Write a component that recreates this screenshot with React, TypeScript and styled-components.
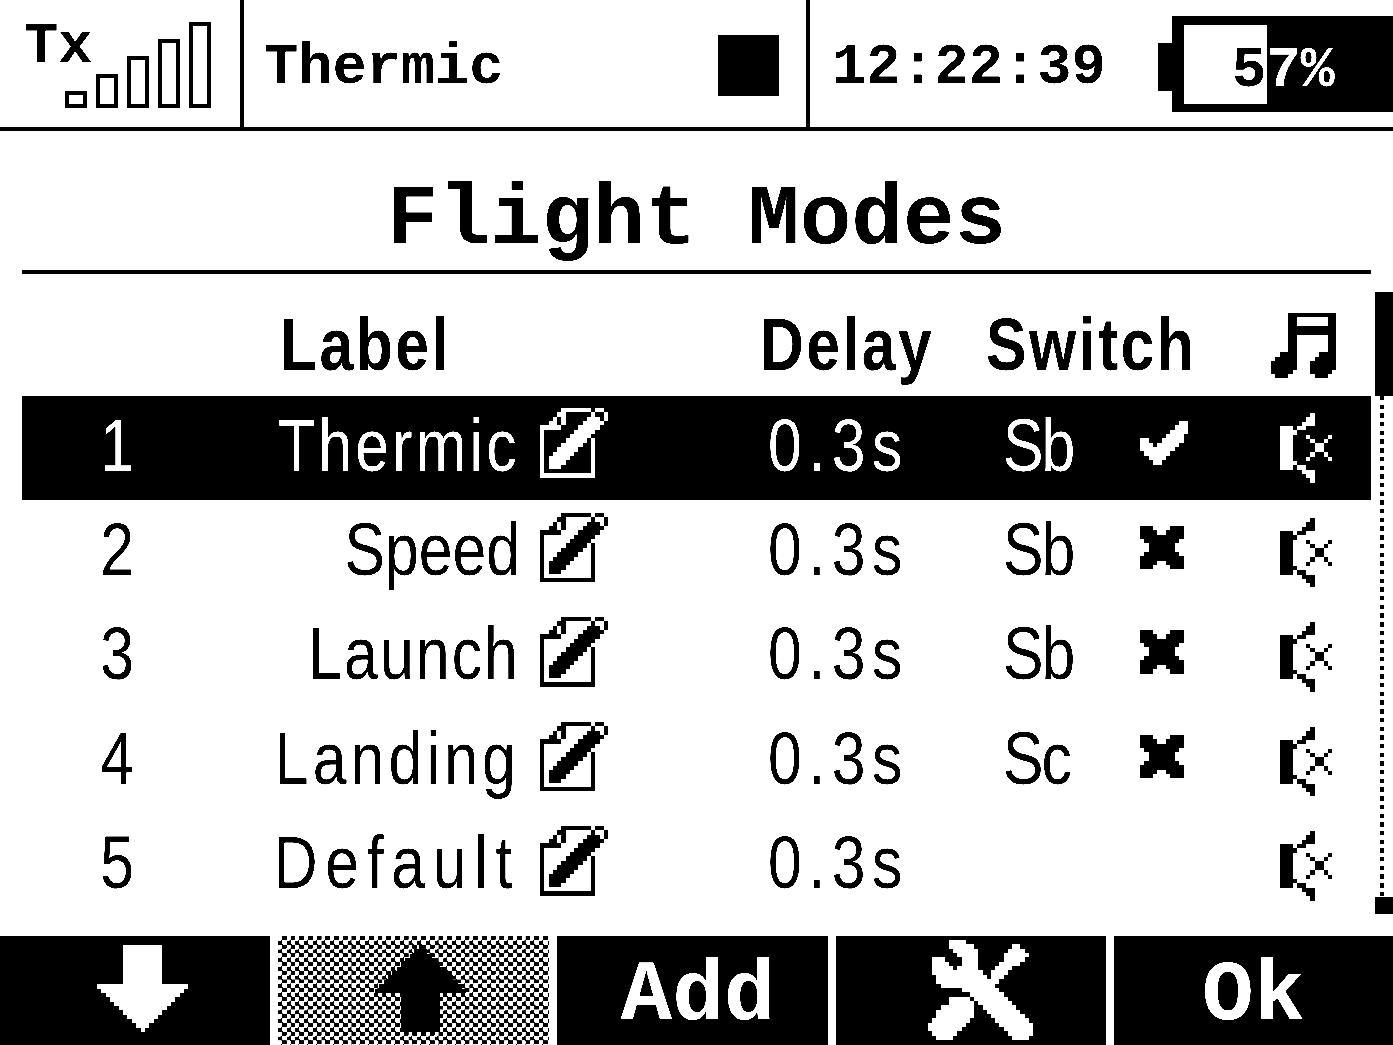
import React from "react";
import styled, { createGlobalStyle } from "styled-components";

const PX = 4.353;

const GlobalStyle = createGlobalStyle`
  html, body {
    margin: 0;
    padding: 0;
    background: #fff;
  }
`;

const Screen = styled.div`
  width: 1393px;
  height: 1045px;
  display: flex;
  flex-direction: column;
  overflow: hidden;
  background: #fff;
  color: #000;
  font-family: "Liberation Sans", Arial, sans-serif;
  filter: contrast(6);
`;

const StatusBar = styled.header`
  height: 127px;
  flex: none;
  display: flex;
  border-bottom: 4px solid #000;
  font-family: "Liberation Mono", monospace;
  font-weight: 700;
  font-size: 57px;
  line-height: 58px;
`;

const TxCell = styled.div`
  width: 240px;
  flex: none;
  display: grid;
  border-right: 4px solid #000;
  & > * {
    grid-area: 1 / 1;
  }
`;

const TxLabel = styled.div`
  margin: 18px 0 0 24px;
`;

const SignalBars = styled.div`
  display: flex;
  align-items: flex-end;
  gap: 9px;
  height: 86px;
  margin: 22px 0 0 65px;
`;

const SignalBar = styled.div<{ $height: number }>`
  width: 22px;
  height: ${(p) => p.$height}px;
  box-sizing: border-box;
  border: 4px solid #000;
`;

const ModelCell = styled.div`
  width: 566px;
  flex: none;
  box-sizing: border-box;
  display: flex;
  align-items: center;
  justify-content: space-between;
  padding: 0 27px 0 20px;
  border-right: 4px solid #000;
`;

const ModelName = styled.div`
  margin-top: 9px;
`;

const ModelMark = styled.div`
  width: 61px;
  height: 61px;
  background: #000;
  margin-top: 3px;
`;

const ClockCell = styled.div`
  flex: 1;
  display: flex;
  align-items: center;
  justify-content: space-between;
  padding-left: 22px;
`;

const Clock = styled.div`
  margin-top: 9px;
`;

const Battery = styled.div`
  display: flex;
  align-items: center;
`;

const BatteryTip = styled.div`
  width: 14px;
  height: 48px;
  background: #000;
  margin-top: 7px;
`;

const BatteryBody = styled.div`
  position: relative;
  width: 221px;
  height: 96px;
  box-sizing: border-box;
  padding: 9px 0 0 12px;
  background: #000;
`;

const BatteryFill = styled.div`
  width: 83px;
  height: 79px;
  background: #fff;
`;

const BatteryText = styled.div`
  position: absolute;
  left: 60px;
  top: 26px;
  color: #fff;
  mix-blend-mode: difference;
`;

const Title = styled.h1`
  height: 139px;
  flex: none;
  margin: 0;
  display: flex;
  align-items: center;
  justify-content: center;
  padding-top: 40px;
  box-sizing: border-box;
  font-family: "Liberation Mono", monospace;
  font-weight: 700;
  font-size: 86px;
  line-height: 87px;
  white-space: pre;
`;

const TitleRule = styled.div`
  height: 4px;
  flex: none;
  margin: 0 22px;
  background: #000;
`;

const Body = styled.div`
  display: flex;
  gap: 4px;
  padding: 18px 0 0 22px;
  height: 644px;
  flex: none;
  box-sizing: border-box;
`;

const Table = styled.div`
  width: 1349px;
  flex: none;
`;

const ColumnHead = styled.div`
  height: 104px;
  display: grid;
  grid-template-columns: 258px 480px 226px 283px 1fr;
  align-items: center;
  font-size: 74px;
  font-weight: 700;
  letter-spacing: 3px;
`;

// the display font is much narrower than any installed one
const HeadLabel = styled.div`
  transform: scaleX(0.82);
  transform-origin: left center;
`;

const MusicSlot = styled.div`
  display: flex;
  margin: 4px 0 0 2px;
`;

const Row = styled.div<{ $selected?: boolean }>`
  height: 104.4px;
  display: grid;
  grid-template-columns: 190px 308px 248px 235px 137px 140px 1fr;
  align-items: center;
  font-size: 74px;
  background: ${(p) => (p.$selected ? "#000" : "#fff")};
  color: ${(p) => (p.$selected ? "#fff" : "#000")};
`;

const Index = styled.div`
  text-align: center;
  margin-top: -6px;
  transform: scaleX(0.82);
`;

const RowLabel = styled.div<{ $tracking: number }>`
  text-align: right;
  margin-top: -6px;
  letter-spacing: ${(p) => p.$tracking}px;
  transform: scaleX(0.82);
  transform-origin: right center;
`;

const EditSlot = styled.div`
  padding-left: 20px;
  display: flex;
  margin-bottom: 10px;
`;

const Delay = styled.div`
  margin-top: -6px;
  letter-spacing: 8px;
  transform: scaleX(0.82);
  transform-origin: left center;
`;

const SwitchName = styled.div`
  margin-top: -6px;
  letter-spacing: -2.4px;
  transform: scaleX(0.82);
  transform-origin: left center;
`;

const IconSlot = styled.div<{ $lift?: number }>`
  display: flex;
  margin-bottom: ${(p) => p.$lift ?? 0}px;
`;

const ScrollBar = styled.div`
  width: 18px;
  height: 622px;
  flex: none;
  display: flex;
  flex-direction: column;
`;

const ScrollThumb = styled.div`
  height: 104px;
  flex: none;
  background: #000;
`;

const ScrollTrack = styled.div`
  flex: 1;
  margin: 0 5px;
  width: 4px;
  background: repeating-linear-gradient(#000 0 4.35px, #fff 4.35px 8.7px);
`;

const ScrollEnd = styled.div`
  height: 17px;
  flex: none;
  background: #000;
`;

const Footer = styled.footer`
  flex: none;
  height: 109px;
  margin-top: 18px;
  display: grid;
  grid-template-columns: 270px 271px 271px 270px 1fr;
  gap: 8px;
`;

const SoftKey = styled.div<{
  $disabled?: boolean;
  $shift?: number;
  $top?: number;
  $bottom?: number;
}>`
  display: flex;
  align-items: center;
  justify-content: center;
  box-sizing: border-box;
  padding: ${(p) => p.$top ?? 0}px 0 ${(p) => p.$bottom ?? 0}px ${(p) => p.$shift ?? 0}px;
  color: ${(p) => (p.$disabled ? "#000" : "#fff")};
  background: ${(p) =>
    p.$disabled
      ? "repeating-conic-gradient(#000 0 25%, #fff 0 50%) 0 0 / 8.706px 8.706px"
      : "#000"};
  font-family: "Liberation Mono", monospace;
  font-weight: 700;
  font-size: 86px;
  line-height: 87px;
`;

const PixelSvg = styled.svg`
  display: block;
  flex: none;
  fill: currentColor;
  shape-rendering: crispEdges;
`;

// draws a bitmap from the display, one string per row
const PixelIcon = ({ rows, width }: { rows: string[]; width?: number }) => {
  const cols = rows[0].length;
  let d = "";
  rows.forEach((row, y) => {
    for (const m of row.matchAll(/#+/g)) {
      d += `M${m.index} ${y}h${m[0].length}v1h-${m[0].length}z`;
    }
  });
  return (
    <PixelSvg
      width={width ?? cols * PX}
      height={rows.length * PX}
      viewBox={`0 0 ${cols} ${rows.length}`}
      preserveAspectRatio="none"
    >
      <path d={d} />
    </PixelSvg>
  );
};

const editIcon = [
  ".....#######.##.",
  "....##......#..#",
  "...#.#.....###.#",
  "..##.#....#####.",
  "#####....#####..",
  "#.......#####...",
  "#......#####....",
  "#.....#####.#...",
  "#....#####..#...",
  "#...#####...#...",
  "#..#####....#...",
  "#.#####.....#...",
  "#.####......#...",
  "#.###.......#...",
  "#...........#...",
  "#############...",
];

const speakerIcon = [
  ".......#....",
  "......##....",
  ".....###....",
  "###.##......",
  "####........",
  "###...#....#",
  "###....#..#.",
  "###.....##..",
  "###.....##..",
  "###....#..#.",
  "###...#....#",
  "####........",
  "###.##......",
  ".....###....",
  "......##....",
  ".......#....",
];

const checkIcon = [
  ".........##",
  "........###",
  ".......####",
  "......####.",
  "##...#####.",
  "###.#####..",
  "########...",
  ".######....",
  "..####.....",
  "...##......",
];

const crossIcon = [
  "###....###",
  "####..####",
  "##########",
  ".########.",
  "..######..",
  "..######..",
  ".########.",
  "##########",
  "####..####",
  "###....###",
];

const musicIcon = [
  "....###########",
  "....##.......##",
  "....##.......##",
  "....###########",
  "....###########",
  "....##.......##",
  "....##.......##",
  "....##.......##",
  "....##.......##",
  "..####.....####",
  ".#####....#####",
  "######...######",
  "######...######",
  "#####....#####.",
  ".###......###..",
];

const arrowShaft = ".".repeat(6) + "#".repeat(9) + ".".repeat(6);
const arrowHead = Array.from({ length: 11 }, (_, i) => {
  return ".".repeat(i) + "#".repeat(21 - i * 2) + ".".repeat(i);
});
const downArrow = [...Array(9).fill(arrowShaft), ...arrowHead];
const upArrow = [...downArrow].reverse();

const toolsIcon = [
  ".....####................",
  ".....######.........##...",
  "......######.......####..",
  ".......#####......######.",
  ".###....####......#####..",
  ".####...####.....#####...",
  ".#####.#####....####.....",
  ".############..####......",
  "..############.###.......",
  "..###############........",
  "...#############.........",
  "........#########........",
  "..........########.......",
  ".....#####.########......",
  ".....######.########.....",
  "...########..########....",
  "..#########...########...",
  "..#########....########..",
  ".#########......########.",
  "#########........########",
  "########..........#######",
  ".######............######",
  "..####..............####.",
];

type Mode = {
  id: number;
  label: string;
  tracking: number;
  delay: string;
  sw?: string;
  active?: boolean;
};

const modes: Mode[] = [
  { id: 1, label: "Thermic", tracking: 4, delay: "0.3s", sw: "Sb", active: true },
  { id: 2, label: "Speed", tracking: 0, delay: "0.3s", sw: "Sb" },
  { id: 3, label: "Launch", tracking: 2.6, delay: "0.3s", sw: "Sb" },
  { id: 4, label: "Landing", tracking: 5.1, delay: "0.3s", sw: "Sc" },
  { id: 5, label: "Default", tracking: 9.4, delay: "0.3s" },
];

const App = () => {
  return (
    <Screen>
      <GlobalStyle />
      <StatusBar>
        <TxCell>
          <TxLabel>Tx</TxLabel>
          <SignalBars>
            {[17, 34, 52, 69, 86].map((h) => (
              <SignalBar key={h} $height={h} />
            ))}
          </SignalBars>
        </TxCell>
        <ModelCell>
          <ModelName>Thermic</ModelName>
          <ModelMark />
        </ModelCell>
        <ClockCell>
          <Clock>12:22:39</Clock>
          <Battery>
            <BatteryTip />
            <BatteryBody>
              <BatteryFill />
              <BatteryText>57%</BatteryText>
            </BatteryBody>
          </Battery>
        </ClockCell>
      </StatusBar>
      <Title>Flight Modes</Title>
      <TitleRule />
      <Body>
        <Table>
          <ColumnHead>
            <span />
            <HeadLabel>Label</HeadLabel>
            <HeadLabel>Delay</HeadLabel>
            <HeadLabel>Switch</HeadLabel>
            <MusicSlot>
              <PixelIcon rows={musicIcon} />
            </MusicSlot>
          </ColumnHead>
          {modes.map((m) => (
            <Row key={m.id} $selected={m.id === 1}>
              <Index>{m.id}</Index>
              <RowLabel $tracking={m.tracking}>{m.label}</RowLabel>
              <EditSlot>
                <PixelIcon rows={editIcon} width={68} />
              </EditSlot>
              <Delay>{m.delay}</Delay>
              <SwitchName>{m.sw}</SwitchName>
              <IconSlot $lift={10}>
                {m.sw && <PixelIcon rows={m.active ? checkIcon : crossIcon} />}
              </IconSlot>
              <IconSlot>
                <PixelIcon rows={speakerIcon} />
              </IconSlot>
            </Row>
          ))}
        </Table>
        <ScrollBar>
          <ScrollThumb />
          <ScrollTrack />
          <ScrollEnd />
        </ScrollBar>
      </Body>
      <Footer>
        <SoftKey $shift={15} $bottom={4}>
          <PixelIcon rows={downArrow} />
        </SoftKey>
        <SoftKey $disabled $shift={15} $bottom={4}>
          <PixelIcon rows={upArrow} />
        </SoftKey>
        <SoftKey $shift={11} $top={12}>
          Add
        </SoftKey>
        <SoftKey $shift={18}>
          <PixelIcon rows={toolsIcon} width={105} />
        </SoftKey>
        <SoftKey $top={12}>Ok</SoftKey>
      </Footer>
    </Screen>
  );
};

export default App;
